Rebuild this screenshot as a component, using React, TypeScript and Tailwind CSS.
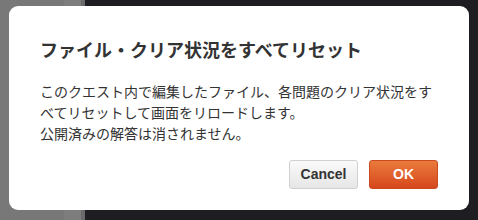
import React from 'react'

export default function App() {
  return (
    <div
      className="relative h-[220px] w-[478px] overflow-hidden flex"
      style={{ fontFamily: '"Noto Sans CJK JP", "Noto Sans", sans-serif' }}
    >
      {/* backdrop (page underneath the overlay) */}
      <div className="absolute inset-0 flex">
        <div className="w-[64px] bg-[#787878]" />
        <div className="w-[17px] bg-[#7d7d7d]" />
        <div className="w-[4px] bg-[#6a6a6a]" />
        <div className="flex-1 bg-[#1e1e22]" />
      </div>

      {/* Modal */}
      <div className="relative ml-[9px] mt-[6px] w-[460px] h-[204px] bg-white rounded-[9px] pt-[30px] px-[31px] flex flex-col">
        <h2 className="text-[18px] leading-[27px] font-bold text-[#333]">
          ファイル・クリア状況をすべてリセット
        </h2>
        <p className="mt-[18px] text-[14px] leading-[21px] text-[#333]">
          このクエスト内で編集したファイル、各問題のクリア状況をすべてリセットして画面をリロードします。
          <br />
          公開済みの解答は消されません。
        </p>
        <div className="mt-auto mb-[21px] flex justify-end gap-[11px]">
          <button
            className="w-[69px] h-[29px] rounded-[3px] border border-[#d0d0d0] bg-gradient-to-b from-[#fafafa] to-[#e6e6e6] text-[14px] font-bold text-[#333]"
            style={{ fontFamily: '"Liberation Sans", Arial, sans-serif' }}
          >
            Cancel
          </button>
          <button
            className="w-[69px] h-[29px] rounded-[3px] border border-[#c94a1e] bg-gradient-to-b from-[#ea7a3c] to-[#d6461b] text-[14px] font-bold text-white"
            style={{ fontFamily: '"Liberation Sans", Arial, sans-serif' }}
          >
            OK
          </button>
        </div>
      </div>
    </div>
  )
}
